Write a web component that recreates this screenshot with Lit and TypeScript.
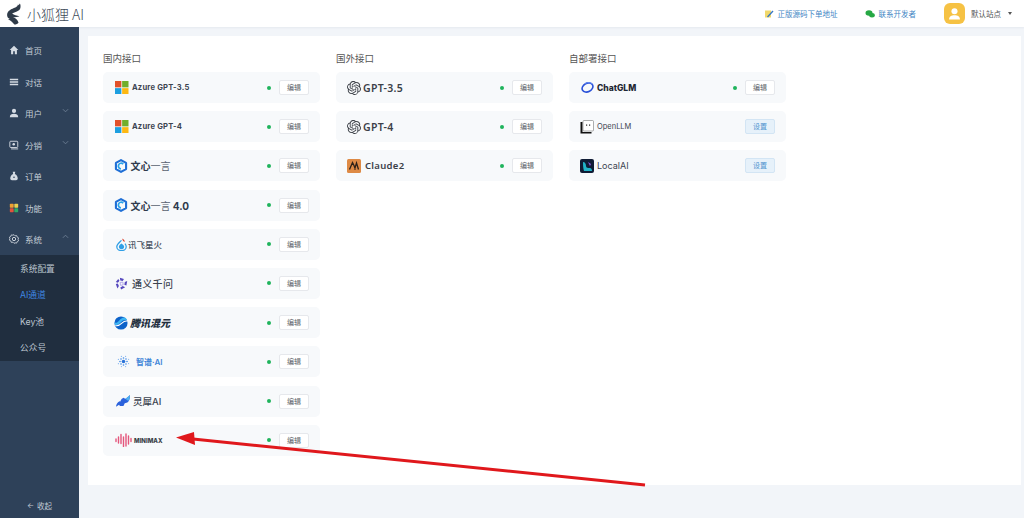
import { LitElement, html, css, svg } from 'lit';
import { customElement } from 'lit/decorators.js';

const openaiPath =
  'M22.2819 9.8211a5.9847 5.9847 0 0 0-.5157-4.9108 6.0462 6.0462 0 0 0-6.5098-2.9A6.0651 6.0651 0 0 0 4.9807 4.1818a5.9847 5.9847 0 0 0-3.9977 2.9 6.0462 6.0462 0 0 0 .7427 7.0966 5.98 5.98 0 0 0 .511 4.9107 6.051 6.051 0 0 0 6.5146 2.9001A5.9847 5.9847 0 0 0 13.2599 24a6.0557 6.0557 0 0 0 5.7718-4.2058 5.9894 5.9894 0 0 0 3.9977-2.9001 6.0557 6.0557 0 0 0-.7475-7.0729zm-9.022 12.6081a4.4755 4.4755 0 0 1-2.8764-1.0408l.1419-.0804 4.7783-2.7582a.7948.7948 0 0 0 .3927-.6813v-6.7369l2.02 1.1686a.071.071 0 0 1 .038.052v5.5826a4.504 4.504 0 0 1-4.4945 4.4944zm-9.6607-4.1254a4.4708 4.4708 0 0 1-.5346-3.0137l.142.0852 4.783 2.7582a.7712.7712 0 0 0 .7806 0l5.8428-3.3685v2.3324a.0804.0804 0 0 1-.0332.0615L9.74 19.9502a4.4992 4.4992 0 0 1-6.1408-1.6464zM2.3408 7.8956a4.485 4.485 0 0 1 2.3655-1.9728V11.6a.7664.7664 0 0 0 .3879.6765l5.8144 3.3543-2.0201 1.1685a.0757.0757 0 0 1-.071 0l-4.8303-2.7865A4.504 4.504 0 0 1 2.3408 7.872zm16.5963 3.8558L13.1038 8.364 15.1192 7.2a.0757.0757 0 0 1 .071 0l4.8303 2.7913a4.4944 4.4944 0 0 1-.6765 8.1042v-5.6772a.79.79 0 0 0-.407-.667zm2.0107-3.0231l-.142-.0852-4.7735-2.7818a.7759.7759 0 0 0-.7854 0L9.409 9.2297V6.8974a.0662.0662 0 0 1 .0284-.0615l4.8303-2.7866a4.4992 4.4992 0 0 1 6.6802 4.66zM8.3065 12.863l-2.02-1.1638a.0804.0804 0 0 1-.038-.0567V6.0742a4.4992 4.4992 0 0 1 7.3757-3.4537l-.142.0805L8.704 5.459a.7948.7948 0 0 0-.3927.6813zm1.0976-2.3654l2.602-1.4998 2.6069 1.4998v2.9994l-2.5974 1.4997-2.6067-1.4997Z';

type Channel = {
  logo: string;
  name: unknown;
  nameClass: string;
  action?: 'edit' | 'set';
};

const logos: Record<string, () => unknown> = {
  azure: () => html`<svg class="logo l-azure" viewBox="0 0 14 14">
    <rect width="6.6" height="6.6" fill="#e2512a" /><rect x="7.4" width="6.6" height="6.6" fill="#72ae2c" />
    <rect y="7.4" width="6.6" height="6.6" fill="#1d9fe0" /><rect x="7.4" y="7.4" width="6.6" height="6.6" fill="#fdb813" />
  </svg>`,
  wenxin: () => html`<svg class="logo l-wenxin" viewBox="0 0 16 16">
    <path d="M8 1.200l5.800 3.300v7L8 14.800l-5.800-3.300v-7z" fill="none" stroke="#1f6fd6" stroke-width="2.400" stroke-linejoin="round" />
    <path d="M10.500 5.800A3.200 3.200 0 1 0 8 11.200" fill="none" stroke="#29a3ea" stroke-width="2" />
  </svg>`,
  xunfei: () => html`<svg class="logo l-xunfei" viewBox="0 0 14 16">
    <path d="M7 3C4 6 1 8 1 11a6 5 0 0 0 12 0c0-1.500-.6-2.700-1.600-3.800" fill="none" stroke="#2f9fe6" stroke-width="1.600" />
    <path d="M7 7c-2 1.500-3.300 2.500-3.300 4.200a3.300 3 0 0 0 6.600 0C10.300 9.500 8.500 8 7 7z" fill="#2f9fe6" />
    <path d="M8 .5c2.200 1 3.200 2.600 3 4.500C9.500 4.500 8 3 8 .5z" fill="#d9432f" />
  </svg>`,
  tongyi: () => html`<svg class="logo l-tongyi" viewBox="0 0 16 16">
    <path d="M6 1l5 1.500-1.500 2.500-3-.8zM15 5l-1 5.500-2.500-1 .6-3.500zM12.500 12.500L7.500 15.500 6.500 13l3-1.800zM3 14L1 8.500l2.500-.6 1.300 3.300zM1 6l3-3.500 1.500 2L3.500 7z" fill="#5547bd" />
    <path d="M6.300 6.700L9.800 6.300 10 9.800 6.800 10.300z" fill="none" stroke="#a79be8" stroke-width="1" />
  </svg>`,
  tencent: () => html`<svg class="logo l-tencent" viewBox="0 0 16 16">
    <circle cx="8" cy="8" r="7.500" fill="#0d62c9" />
    <path d="M1 10c3 1 5-1 7-3s4-3 7-2c-.5-1.500-1.200-2.500-2-3C10 1 8 3 6 5S3 8 .8 7.500z" fill="#3db4f2" />
    <path d="M1.500 11c3 .8 5.500-.8 7.500-2.800s3.800-2.700 6-2.400" fill="none" stroke="#fff" stroke-width="1.200" />
  </svg>`,
  zhipu: () => html`<svg class="logo l-zhipu" viewBox="0 0 16 16">
    <circle cx="8" cy="8" r="2.200" fill="#2a72d8" />
    ${[0, 45, 90, 135, 180, 225, 270, 315].map((a) => {
      const r = (a * Math.PI) / 180;
      return svg`<circle cx=${8 + 4.3 * Math.cos(r)} cy=${8 + 4.3 * Math.sin(r)} r="1" fill="#3f8ae6" />
        <circle cx=${8 + 6.8 * Math.cos(r + 0.39)} cy=${8 + 6.8 * Math.sin(r + 0.39)} r=".7" fill="#7fb2ef" />`;
    })}
  </svg>`,
  lingyi: () => html`<svg class="logo l-lingyi" viewBox="0 0 16 14">
    <path d="M0 13.500c.3-3 1.500-5.500 4-6.500l1 .5C5.500 5 7 3.500 9 3l1.500 1.500C12 3.500 14 2 16 0c0 4.500-.8 7-3 8.500l-3 .8-1.500 3.200H4.500L3.500 11z" fill="#2b62dc" />
    <path d="M9.500 3.500l1 1C12 3.500 14 2 16 0c0 3-.6 5.200-2 6.800z" fill="#4fb2f0" />
  </svg>`,
  minimax: () => html`<svg class="logo l-minimax" viewBox="0 0 17 14">
    <path d="M1 6v2.500M3.500 4v6M6 1.500v9M8.500 4v9.500M11 1v12M13.500 3v8M16 5.500v3" stroke="#e4567c" stroke-width="1.400" stroke-linecap="round" fill="none" />
  </svg>`,
  openai: () => html`<svg class="logo l-openai" viewBox="0 0 24 24">
    <path d=${openaiPath} fill="#3b3f46" />
  </svg>`,
  claude: () => html`<svg class="logo l-claude" viewBox="0 0 14 14">
    <rect width="14" height="14" rx="1.500" fill="#de8a45" />
    <path d="M2.500 10.500L5.500 3.500 7 6.500 8.500 10.500M7.500 10.500L9.500 4l2 6.500" fill="none" stroke="#2d2118" stroke-width="1.300" />
  </svg>`,
  chatglm: () => html`<svg class="logo l-chatglm" viewBox="0 0 16 16">
    <ellipse cx="8" cy="8" rx="7" ry="5.200" transform="rotate(-28 8 8)" fill="none" stroke="#2b52d8" stroke-width="2" />
    <path d="M5 3.200C8 1 12.500 1.500 14 4" fill="none" stroke="#5f86ee" stroke-width="1.400" />
  </svg>`,
  openllm: () => html`<svg class="logo l-local" viewBox="0 0 14 14">
    <path d="M2.500 2H.5v11.500h11V12H2.500z" fill="#111" />
    <rect x="3" y=".5" width="10.500" height="10.500" rx="1" fill="#fff" stroke="#777" stroke-width=".6" />
    <rect x="6" y="4.500" width="1.200" height="1.200" fill="#222" /><rect x="9" y="4.500" width="1.200" height="1.200" fill="#222" />
  </svg>`,
  localai: () => html`<svg class="logo l-local" viewBox="0 0 14 14">
    <rect width="14" height="14" rx="2" fill="#101c35" />
    <path d="M3 3c2 0 3 2 3 4s2 2 4 2 2 3 2 3H4C3 9 3 6 3 3z" fill="#22b3c8" />
    <path d="M8 3l3 2-1 2z" fill="#8a5ae0" />
  </svg>`,
};

const columns: { title: string; rows: Channel[] }[] = [
  {
    title: '国内接口',
    rows: [
      { logo: 'azure', name: 'Azure GPT-3.5', nameClass: 'n-azure' },
      { logo: 'azure', name: 'Azure GPT-4', nameClass: 'n-azure' },
      { logo: 'wenxin', name: html`文心<span class="light">一言</span>`, nameClass: 'n-wenxin' },
      { logo: 'wenxin', name: html`文心<span class="light">一言</span> 4.0`, nameClass: 'n-wenxin' },
      { logo: 'xunfei', name: '讯飞星火', nameClass: 'n-xunfei' },
      { logo: 'tongyi', name: '通义千问', nameClass: 'n-tongyi' },
      { logo: 'tencent', name: '腾讯混元', nameClass: 'n-tencent' },
      { logo: 'zhipu', name: '智谱·AI', nameClass: 'n-zhipu' },
      { logo: 'lingyi', name: '灵犀AI', nameClass: 'n-lingyi' },
      { logo: 'minimax', name: 'MINIMAX', nameClass: 'n-minimax' },
    ],
  },
  {
    title: '国外接口',
    rows: [
      { logo: 'openai', name: 'GPT-3.5', nameClass: 'n-gpt' },
      { logo: 'openai', name: 'GPT-4', nameClass: 'n-gpt' },
      { logo: 'claude', name: 'Claude2', nameClass: 'n-claude' },
    ],
  },
  {
    title: '自部署接口',
    rows: [
      { logo: 'chatglm', name: 'ChatGLM', nameClass: 'n-chatglm' },
      { logo: 'openllm', name: 'OpenLLM', nameClass: 'n-openllm', action: 'set' },
      { logo: 'localai', name: 'LocalAI', nameClass: 'n-localai', action: 'set' },
    ],
  },
];

const navIcons: Record<string, unknown> = {
  home: html`<svg viewBox="0 0 12 12"><path d="M6 1L.8 6h1.700v5h2.500V7.500h2V11h2.500V6h1.700z" fill="#d5dbe3" /></svg>`,
  chat: html`<svg viewBox="0 0 12 12"><path d="M1 2.200h10v1.600H1zM1 5.200h10v1.600H1zM1 8.200h10v1.600H1z" fill="#d5dbe3" /></svg>`,
  user: html`<svg viewBox="0 0 12 12"><circle cx="6" cy="3.500" r="2.500" fill="#d5dbe3" /><path d="M1 11c0-3 2-4 5-4s5 1 5 4z" fill="#d5dbe3" /></svg>`,
  share: html`<svg viewBox="0 0 12 12"><rect x="1" y="1.500" width="9.500" height="7.500" rx="1" fill="none" stroke="#d5dbe3" stroke-width="1.100" /><circle cx="5.700" cy="5" r="1.500" fill="#d5dbe3" /><path d="M2.500 10.700h8.500" stroke="#d5dbe3" stroke-width="1.100" /></svg>`,
  order: html`<svg viewBox="0 0 12 12"><path d="M4.500 1h3L7 3.500c2.500 1 3.500 3.500 3.500 5.500 0 1.500-1 2-2 2h-5c-1 0-2-.5-2-2 0-2 1-4.500 3.500-5.500z" fill="#d5dbe3" /><circle cx="6" cy="7.500" r="1" fill="#2e4159" /></svg>`,
  feature: html`<svg viewBox="0 0 12 12"><rect x="1" y="1" width="4.600" height="4.600" rx=".8" fill="#f0a030" /><rect x="6.400" y="1" width="4.600" height="4.600" rx=".8" fill="#e8d050" /><rect x="1" y="6.400" width="4.600" height="4.600" rx=".8" fill="#e0533c" /><rect x="6.400" y="6.400" width="4.600" height="4.600" rx=".8" fill="#2fa866" /></svg>`,
  system: html`<svg viewBox="0 0 12 12"><circle cx="6" cy="6" r="2" fill="none" stroke="#d5dbe3" stroke-width="1.100" /><path d="M6 .8l1.300 1.400 1.900-.3.600 1.800 1.700.9-.6 1.800.6 1.800-1.700.9-.6 1.800-1.900-.3L6 11.200l-1.300-1.400-1.900.3-.6-1.800-1.700-.9.600-1.800-.6-1.800 1.700-.9.600-1.800 1.900.3z" fill="none" stroke="#d5dbe3" stroke-width="1" /></svg>`,
};

const navItems = [
  { icon: 'home', label: '首页' },
  { icon: 'chat', label: '对话' },
  { icon: 'user', label: '用户', chevron: 'down' },
  { icon: 'share', label: '分销', chevron: 'down' },
  { icon: 'order', label: '订单' },
  { icon: 'feature', label: '功能' },
  { icon: 'system', label: '系统', chevron: 'up' },
];

const subItems = ['系统配置', 'AI通道', 'Key池', '公众号'];

@customElement('app-root')
export class AppRoot extends LitElement {
  static styles = css`
    :host {
      display: block;
      position: relative;
      width: 1024px;
      height: 518px;
      overflow: hidden;
      background: #f2f5f9;
      font-family: 'Inter', 'Noto Sans CJK SC', sans-serif;
      color: #444;
    }

    .header {
      height: 27px;
      background: #fff;
      display: flex;
      align-items: center;
      box-shadow: 0 1px 2px rgba(30, 50, 80, 0.06);
      position: relative;
    }

    .brand {
      display: flex;
      align-items: center;
      gap: 6px;
      padding-left: 6px;
      width: 200px;
    }

    .brand svg {
      width: 15px;
      height: 22px;
    }

    .brand span {
      font-family: 'Noto Sans CJK SC', sans-serif;
      font-size: 14px;
      font-weight: 300;
      color: #3d4a58;
    }

    .top-links {
      margin-left: auto;
      display: flex;
      align-items: center;
      font-size: 7.5px;
      color: #3f86c4;
    }

    .top-link {
      display: flex;
      align-items: center;
      gap: 4px;
    }

    .top-link svg {
      width: 10px;
      height: 10px;
    }

    .top-link + .top-link {
      margin-left: 27px;
    }

    .avatar {
      width: 21px;
      height: 21px;
      border-radius: 6px;
      background: #f6c244;
      margin-left: 28px;
      display: flex;
      align-items: center;
      justify-content: center;
    }

    .avatar svg {
      width: 13px;
      height: 13px;
    }

    .site {
      margin-left: 6px;
      margin-right: 12px;
      display: flex;
      align-items: center;
      gap: 7px;
      font-size: 7.5px;
      color: #555;
    }

    .caret {
      width: 0;
      height: 0;
      border-left: 2.5px solid transparent;
      border-right: 2.5px solid transparent;
      border-top: 3px solid #555;
    }

    .body {
      display: flex;
      height: 491px;
    }

    .side {
      width: 79px;
      flex: none;
      background: #2e4159;
      display: flex;
      flex-direction: column;
      padding-top: 7.25px;
      box-sizing: border-box;
      color: #c3ccd6;
    }

    .nav-item {
      height: 31.5px;
      display: flex;
      align-items: center;
      padding-left: 9px;
      font-size: 8.5px;
      gap: 6px;
      position: relative;
    }

    .nav-item svg {
      width: 10px;
      height: 10px;
      flex: none;
    }

    .nav-item .chev {
      width: 7px;
      height: 7px;
      position: absolute;
      right: 10px;
      top: 10px;
    }

    .sub {
      background: #202e3f;
    }

    .sub-item {
      height: 26.5px;
      display: flex;
      align-items: center;
      padding-left: 20px;
      font-size: 8.7px;
      color: #bcc5cf;
    }

    .sub-item.active {
      color: #3f86e0;
    }

    .collapse {
      margin-top: auto;
      height: 26px;
      display: flex;
      align-items: center;
      justify-content: center;
      gap: 3px;
      font-size: 7.5px;
      color: #c3ccd6;
    }

    .main {
      flex: 1;
      padding: 9px 3px 33px 9px;
      min-width: 0;
    }

    .card {
      height: 100%;
      background: #fff;
      padding: 16px 15px 0;
      box-sizing: border-box;
      display: flex;
      gap: 16px;
    }

    .col {
      width: 217px;
    }

    .col-title {
      font-size: 9.5px;
      line-height: 14px;
      color: #555;
      margin-bottom: 6px;
    }

    .row {
      height: 31px;
      border-radius: 5px;
      background: #f7f9fb;
      display: flex;
      align-items: center;
      padding-left: 9px;
      margin-bottom: 8.2px;
    }

    .logo {
      flex: none;
      height: auto;
      display: block;
    }

    .l-azure {
      width: 13.5px;
      margin: 0 3.5px 0 3px;
    }

    .l-wenxin {
      width: 14px;
      margin: 0 3px 0 1.5px;
    }

    .l-xunfei {
      width: 11px;
      margin: 0 1px 0 4px;
    }

    .l-tongyi {
      width: 13px;
      margin: 0 4px 0 3px;
    }

    .l-tencent {
      width: 14px;
      margin: 0 2px 0 2px;
    }

    .l-zhipu {
      width: 13px;
      margin: 0 6px 0 5px;
    }

    .l-lingyi {
      width: 14px;
      margin: 0 3px 0 4px;
    }

    .l-minimax {
      width: 17px;
      margin: 0 2px 0 3px;
    }

    .l-openai {
      width: 14px;
      margin: 0 2px 0 2px;
    }

    .l-claude {
      width: 14px;
      margin: 0 4px 0 2px;
    }

    .l-chatglm {
      width: 13px;
      margin: 0 3px 0 3px;
    }

    .l-local {
      width: 14px;
      margin: 0 3px 0 2px;
    }

    .name {
      white-space: nowrap;
      color: #3c4450;
    }

    .n-azure {
      font-size: 7.6px;
      font-weight: 700;
      letter-spacing: 0.2px;
    }

    .n-wenxin {
      font-size: 10px;
      font-weight: 700;
      color: #2e3a4c;
    }

    .light {
      font-weight: 400;
      color: #59626f;
    }

    .n-xunfei {
      font-size: 8.5px;
      font-weight: 500;
      color: #4a5362;
    }

    .n-tongyi {
      font-size: 10px;
      font-weight: 500;
      letter-spacing: 0.3px;
    }

    .n-tencent {
      font-size: 10px;
      font-weight: 800;
      font-style: italic;
      color: #23303f;
    }

    .n-zhipu {
      font-size: 8px;
      font-weight: 600;
      color: #3f86d8;
    }

    .n-lingyi {
      font-size: 9.5px;
      font-weight: 500;
    }

    .n-minimax {
      font-size: 6px;
      font-weight: 800;
      color: #3a3f48;
    }

    .n-gpt {
      font-family: 'Noto Sans', sans-serif;
      font-size: 10.5px;
      font-weight: 600;
      letter-spacing: 0.3px;
      color: #3b4048;
    }

    .n-claude {
      font-family: 'Noto Sans', sans-serif;
      font-size: 9.5px;
      font-weight: 600;
      letter-spacing: 0.3px;
      color: #3b4048;
    }

    .n-chatglm {
      font-size: 8.5px;
      font-weight: 800;
      color: #1f2733;
    }

    .n-openllm {
      font-size: 7.5px;
    }

    .n-localai {
      font-size: 9px;
    }

    .dot {
      width: 4px;
      height: 4px;
      border-radius: 50%;
      background: #1fb45c;
      margin-left: auto;
      margin-right: 8px;
      flex: none;
    }

    .btn {
      width: 30px;
      height: 15px;
      box-sizing: border-box;
      margin-right: 11px;
      border: 1px solid #e6e8ec;
      border-radius: 2px;
      background: #fff;
      color: #5a5f68;
      font-size: 7px;
      line-height: 13px;
      text-align: center;
      flex: none;
    }

    .btn.set {
      margin-left: auto;
      background: #e6f1fa;
      border-color: #d3e5f4;
      color: #4f94cf;
    }

    .arrow {
      position: absolute;
      left: 0;
      top: 0;
      width: 1024px;
      height: 518px;
      pointer-events: none;
    }
  `;

  private _renderRow(row: Channel) {
    return html`
      <div class="row">
        ${logos[row.logo]()}
        <span class="name ${row.nameClass}">${row.name}</span>
        ${row.action === 'set'
          ? html`<div class="btn set">设置</div>`
          : html`<span class="dot"></span><div class="btn">编辑</div>`}
      </div>
    `;
  }

  private _renderChevron(dir: string) {
    return html`<svg class="chev" viewBox="0 0 8 8">
      <path d=${dir === 'up' ? 'M1 5.500l3-3 3 3' : 'M1 2.500l3 3 3-3'} fill="none" stroke="#6f8096" stroke-width="1" />
    </svg>`;
  }

  render() {
    return html`
      <div class="header">
        <div class="brand">
          <svg viewBox="0 0 16 24">
            <path d="M13 .5c0 2-1 3.500-3 4.500C6 6.500 1 8.500 1 13c0 2 1 3.500 3 4.500l-2 .5c3 1 5 3 7 5.500 2 0 3.500-1 4.500-2-1-3-3-5-6-6 2.500 0 5 0 7-1-3-1-6-1-8-3 3-2 8-2 9-6 .4-2 .2-3.500-.5-5-.5 1-1 1.500-2 2z" fill="#2f3b49" />
          </svg>
          <span>小狐狸 AI</span>
        </div>
        <div class="top-links">
          <div class="top-link">
            <svg viewBox="0 0 10 10">
              <path d="M1 1.500h6v7H1z" fill="#f1d86a" /><path d="M3 7.500L8.500 1.500l1 1L4 8.500z" fill="#3a78c4" />
            </svg>
            正版源码下单地址
          </div>
          <div class="top-link">
            <svg viewBox="0 0 10 10">
              <ellipse cx="4" cy="4" rx="3.500" ry="2.800" fill="#26a844" /><ellipse cx="7" cy="6.300" rx="2.800" ry="2.200" fill="#26a844" />
            </svg>
            联系开发者
          </div>
          <div class="avatar">
            <svg viewBox="0 0 12 12">
              <circle cx="6" cy="4" r="2.800" fill="#fff" /><path d="M1 11.500c0-3 2-4 5-4s5 1 5 4z" fill="#fff" />
            </svg>
          </div>
          <div class="site">默认站点 <span class="caret"></span></div>
        </div>
      </div>
      <div class="body">
        <div class="side">
          ${navItems.map(
            (n) => html`
              <div class="nav-item">
                ${navIcons[n.icon]}<span>${n.label}</span>
                ${n.chevron ? this._renderChevron(n.chevron) : ''}
              </div>
            `
          )}
          <div class="sub">
            ${subItems.map(
              (s) => html`<div class="sub-item ${s === 'AI通道' ? 'active' : ''}">${s}</div>`
            )}
          </div>
          <div class="collapse"><span>←</span><span>收起</span></div>
        </div>
        <div class="main">
          <div class="card">
            ${columns.map(
              (c) => html`
                <div class="col">
                  <div class="col-title">${c.title}</div>
                  ${c.rows.map((r) => this._renderRow(r))}
                </div>
              `
            )}
          </div>
        </div>
      </div>
      <svg class="arrow" viewBox="0 0 1024 518">
        <path d="M645 485L193 439" stroke="#e0181c" stroke-width="3" fill="none" />
        <path d="M176 437.500L194 432 195 445z" fill="#e0181c" />
      </svg>
    `;
  }
}
